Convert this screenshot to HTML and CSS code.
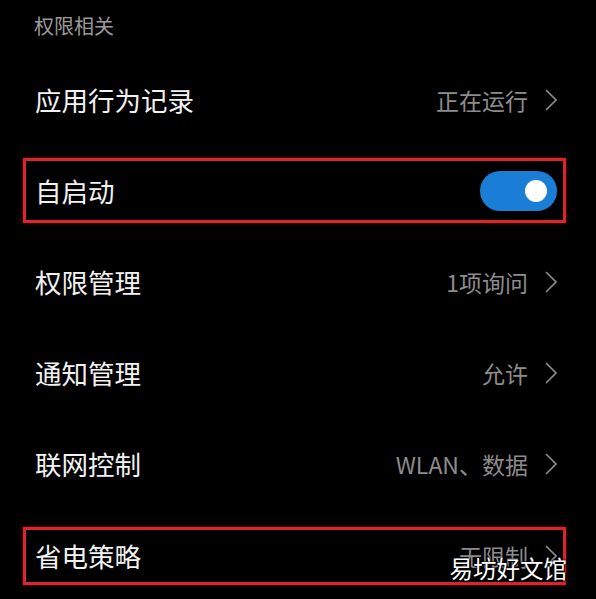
FILE: index.html
```html
<!DOCTYPE html>
<html lang="zh-CN">

<head>
    <meta charset="UTF-8">
    <meta name="viewport" content="width=device-width, initial-scale=1.0">
    <title>权限相关</title>
    <link rel="stylesheet" href="styles.css">
</head>

<body>
    <div class="screen">
        <h4 class="section">权限相关</h4>

        <div class="row">
            <div class="item">
                <span class="label">应用行为记录</span>
                <span class="value">正在运行
                    <svg class="arrow" viewBox="0 0 12 22"><polyline points="1,1 11,11 1,21" /></svg>
                </span>
            </div>
        </div>

        <!-- 自启动 -->
        <div class="row">
            <div class="item mark">
                <span class="label">自启动</span>
                <span class="switch on"><span class="knob"></span></span>
            </div>
        </div>

        <div class="row">
            <div class="item">
                <span class="label">权限管理</span>
                <span class="value">1项询问
                    <svg class="arrow" viewBox="0 0 12 22"><polyline points="1,1 11,11 1,21" /></svg>
                </span>
            </div>
        </div>

        <div class="row">
            <div class="item">
                <span class="label">通知管理</span>
                <span class="value">允许
                    <svg class="arrow" viewBox="0 0 12 22"><polyline points="1,1 11,11 1,21" /></svg>
                </span>
            </div>
        </div>

        <div class="row">
            <div class="item">
                <span class="label">联网控制</span>
                <span class="value">WLAN、数据
                    <svg class="arrow" viewBox="0 0 12 22"><polyline points="1,1 11,11 1,21" /></svg>
                </span>
            </div>
        </div>

        <!-- 省电策略 -->
        <div class="row">
            <div class="item mark short">
                <span class="label">省电策略</span>
                <span class="value">无限制
                    <svg class="arrow" viewBox="0 0 12 22"><polyline points="1,1 11,11 1,21" /></svg>
                </span>
            </div>
        </div>

        <div class="watermark">易坊好文馆</div>
    </div>
</body>

</html>
```

FILE: styles.css
```css
* {
    margin: 0;
    padding: 0;
    box-sizing: border-box;
}

body {
    background-color: #000;
    font-family: "Noto Sans CJK SC", "Noto Sans", sans-serif;
    overflow: hidden;
}

.screen {
    position: relative;
    width: 596px;
    height: 599px;
    overflow: hidden;
}

.section {
    height: 54px;
    line-height: 52px;
    padding-left: 34px;
    font-size: 20px;
    font-weight: normal;
    color: #9a9a9a;
}

.row {
    display: flex;
    align-items: center;
    height: 91px;
    padding: 0 30px 0 23px;
}

.item {
    flex: 1;
    display: flex;
    justify-content: space-between;
    align-items: center;
    height: 65px;
    padding: 0 6px 0 9px;
    border: 3px solid transparent;
}

.item.mark {
    border-color: #d8262c;
    box-shadow: 0 0 3px rgba(230, 30, 40, 0.6);
}

.item.short {
    height: 58px;
    margin-top: 2px;
}

.label {
    font-size: 26.5px;
    color: #f2f2f2;
}

.value {
    display: flex;
    align-items: center;
    font-size: 23px;
    color: #8c8c8c;
}

.arrow {
    width: 12px;
    height: 22px;
    margin-left: 17px;
    fill: none;
    stroke: #8c8c8c;
    stroke-width: 1.6;
}

.switch {
    display: flex;
    justify-content: flex-end;
    align-items: center;
    width: 77px;
    height: 40px;
    padding-right: 10px;
    border-radius: 20px;
    background-color: #1a7ed6;
}

.knob {
    width: 22px;
    height: 22px;
    border-radius: 50%;
    background-color: #fff;
}

.watermark {
    position: absolute;
    right: 29px;
    top: 551px;
    font-size: 23.5px;
    color: #fff;
    text-shadow: 0 0 2px #000, 0 0 2px #000, 1px 1px 1px #000;
}
```
